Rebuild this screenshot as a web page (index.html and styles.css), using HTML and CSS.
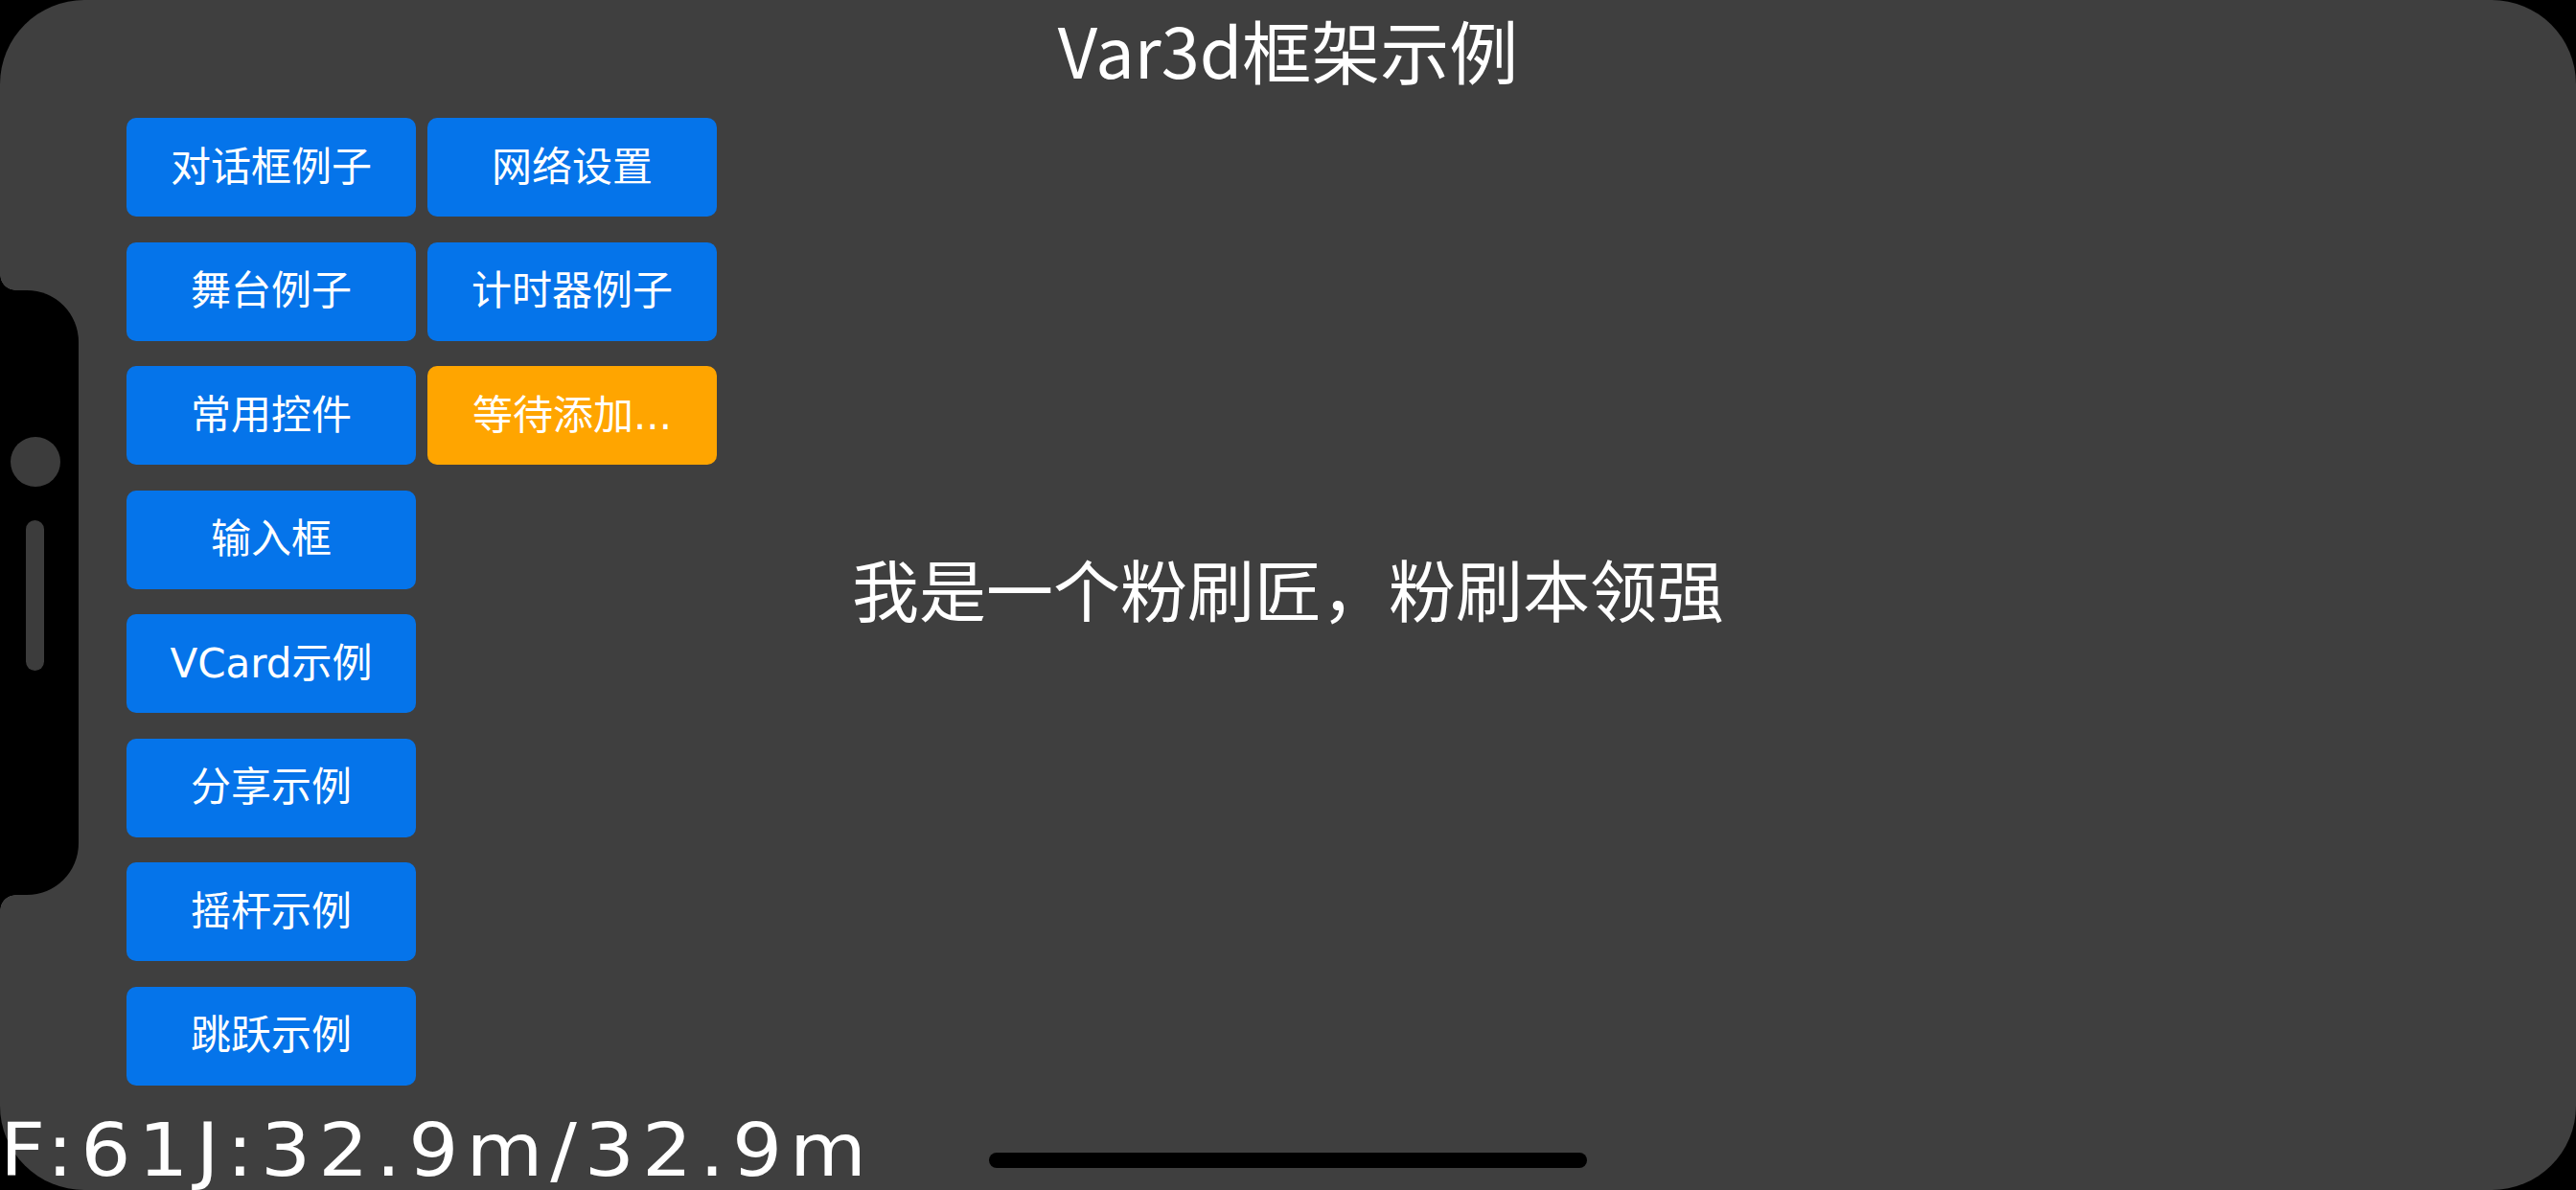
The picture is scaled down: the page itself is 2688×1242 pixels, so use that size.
FILE: index.html
```html
<!DOCTYPE html>
<html lang="zh-CN">
<head>
<meta charset="utf-8">
<title>Var3d框架示例</title>
<link rel="stylesheet" href="styles.css">
</head>
<body>
<div class="screen">
  <h1 class="title">Var3d框架示例</h1>
  <div class="menu">
    <div class="btn">对话框例子</div>
    <div class="btn">网络设置</div>
    <div class="btn">舞台例子</div>
    <div class="btn">计时器例子</div>
    <div class="btn">常用控件</div>
    <div class="btn btn-wait">等待添加...</div>
    <div class="btn col1">输入框</div>
    <div class="btn col1">VCard示例</div>
    <div class="btn col1">分享示例</div>
    <div class="btn col1">摇杆示例</div>
    <div class="btn col1">跳跃示例</div>
  </div>
  <p class="message">我是一个粉刷匠，粉刷本领强</p>
  <div class="stats">F:61J:32.9m/32.9m</div>
  <div class="home-indicator"></div>
  <div class="notch"><span class="camera"></span><span class="speaker"></span></div>
</div>
</body>
</html>
```
FILE: styles.css
```css
html, body {
  margin: 0;
  padding: 0;
  background: #000;
}
body {
  width: 2688px;
  height: 1242px;
  overflow: hidden;
}
.screen {
  position: relative;
  width: 2688px;
  height: 1242px;
  background: #3f3f3f;
  border-radius: 88px;
  display: grid;
  grid-template-columns: 1fr;
  grid-template-rows: 1fr;
  color: #fff;
  font-family: "Noto Sans CJK SC", "DejaVu Sans", sans-serif;
}
.screen > * {
  grid-area: 1 / 1;
}
.title {
  margin: 15px 0 0 0;
  align-self: start;
  justify-self: center;
  font-size: 72px;
  font-weight: 400;
  line-height: 1;
}
.menu {
  align-self: start;
  justify-self: start;
  margin: 123px 0 0 132px;
  display: grid;
  grid-template-columns: 302px 302px;
  grid-auto-rows: 103px;
  column-gap: 12px;
  row-gap: 26.5px;
}
.btn {
  display: flex;
  align-items: center;
  justify-content: center;
  background: #0574ea;
  border-radius: 10px;
  font-size: 42px;
  line-height: 1;
  font-family: "DejaVu Sans", "Noto Sans CJK SC", sans-serif;
}
.btn-wait {
  background: #ffa500;
}
.col1 {
  grid-column: 1;
}
.message {
  margin: 0 0 14px 0;
  align-self: center;
  justify-self: center;
  font-size: 70px;
  line-height: 1;
}
.stats {
  align-self: end;
  justify-self: start;
  margin: 0 0 3px 0;
  font-family: "DejaVu Sans", sans-serif;
  font-size: 76px;
  line-height: 1;
  letter-spacing: 7.3px;
  white-space: nowrap;
  transform: scaleX(1.08);
  transform-origin: left bottom;
}
.home-indicator {
  align-self: end;
  justify-self: center;
  width: 624px;
  height: 16px;
  margin-bottom: 23px;
  background: #000;
  border-radius: 8px;
}
.notch {
  position: absolute;
  left: 0;
  top: 303px;
  width: 82px;
  height: 631px;
  background: #000;
  border-radius: 0 54px 54px 0;
  display: flex;
  flex-direction: column;
  align-items: flex-start;
}
.notch::before,
.notch::after {
  content: "";
  position: absolute;
  left: 0;
  width: 16px;
  height: 16px;
}
.notch::before {
  top: -16px;
  background: radial-gradient(circle at 16px 0, #3f3f3f 15.5px, #000 16px);
}
.notch::after {
  bottom: -16px;
  background: radial-gradient(circle at 16px 16px, #3f3f3f 15.5px, #000 16px);
}
.camera {
  width: 52px;
  height: 52px;
  margin: 153px 0 0 11px;
  border-radius: 50%;
  background: #3c3c3c;
}
.speaker {
  width: 19px;
  height: 157px;
  margin: 35px 0 0 27px;
  border-radius: 10px;
  background: #3c3c3c;
}
```
